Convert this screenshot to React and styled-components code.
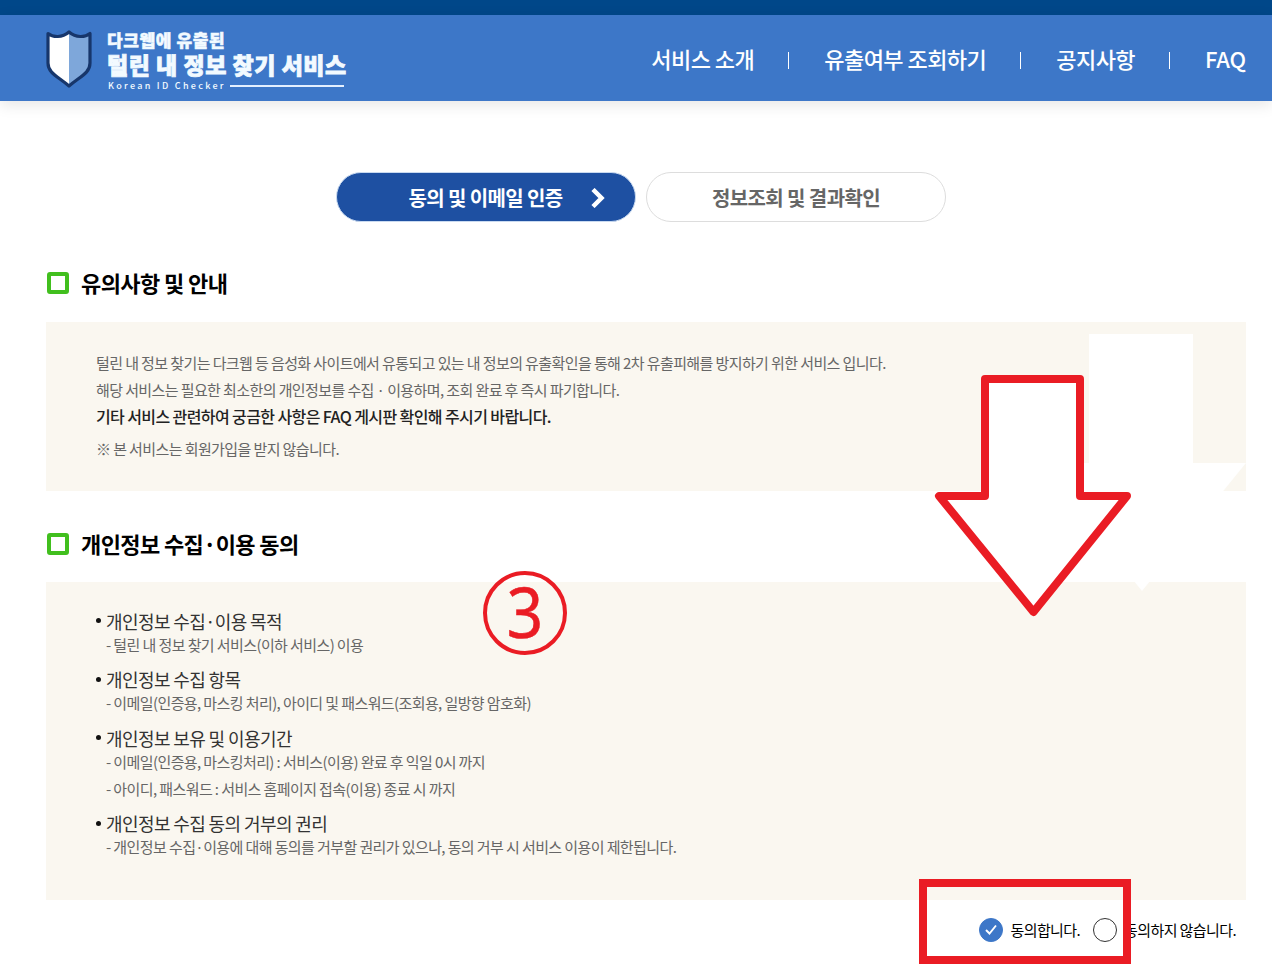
import React from "react";
import styled, { createGlobalStyle } from "styled-components";

const notices = [
  { text: "털린 내 정보 찾기는 다크웹 등 음성화 사이트에서 유통되고 있는 내 정보의 유출확인을 통해 2차 유출피해를 방지하기 위한 서비스 입니다." },
  { text: "해당 서비스는 필요한 최소한의 개인정보를 수집 · 이용하며, 조회 완료 후 즉시 파기합니다." },
  { text: "기타 서비스 관련하여 궁금한 사항은 FAQ 게시판 확인해 주시기 바랍니다.", strong: true },
];

const terms = [
  {
    title: "개인정보 수집·이용 목적",
    details: ["- 털린 내 정보 찾기 서비스(이하 서비스) 이용"],
  },
  {
    title: "개인정보 수집 항목",
    details: ["- 이메일(인증용, 마스킹 처리), 아이디 및 패스워드(조회용, 일방향 암호화)"],
  },
  {
    title: "개인정보 보유 및 이용기간",
    details: [
      "- 이메일(인증용, 마스킹처리) : 서비스(이용) 완료 후 익일 0시 까지",
      "- 아이디, 패스워드 : 서비스 홈페이지 접속(이용) 종료 시 까지",
    ],
  },
  {
    title: "개인정보 수집 동의 거부의 권리",
    details: ["- 개인정보 수집·이용에 대해 동의를 거부할 권리가 있으나, 동의 거부 시 서비스 이용이 제한됩니다."],
  },
];

const Header = () => (
  <HeaderBar>
    <Logo href="#">
      <svg width="48" height="60" viewBox="0 0 48 60">
        <path
          d="M3 4.500C8 8.500 17 9 24 3C31 9 40 8.500 45 4.500V34C45 44 36 47 24 57C12 47 3 44 3 34Z"
          fill="#fff"
        />
        <path d="M24 3C31 9 40 8.500 45 4.500V34C45 44 36 47 24 57Z" fill="#7ea7da" />
        <path
          d="M3 4.500C8 8.500 17 9 24 3C31 9 40 8.500 45 4.500V34C45 44 36 47 24 57C12 47 3 44 3 34Z"
          fill="none"
          stroke="#17366b"
          strokeWidth="3.200"
          strokeLinejoin="round"
        />
      </svg>
      <LogoText>
        <LogoTop>다크웹에 유출된</LogoTop>
        <LogoName>털린 내 정보 찾기 서비스</LogoName>
        <LogoEnglish>Korean ID Checker</LogoEnglish>
      </LogoText>
    </Logo>
    <Nav>
      <a href="#">서비스 소개</a>
      <a href="#">유출여부 조회하기</a>
      <a href="#">공지사항</a>
      <a href="#">FAQ</a>
    </Nav>
  </HeaderBar>
);

const App = () => {
  return (
    <Page>
      <GlobalStyle />
      <TopStrip />
      <Header />
      <Steps>
        <Step $active>
          동의 및 이메일 인증
          <svg width="16" height="20" viewBox="0 0 16 20">
            <path d="M3 1.500L11.500 10L3 18.500" fill="none" stroke="#fff" strokeWidth="4.500" />
          </svg>
        </Step>
        <Step>정보조회 및 결과확인</Step>
      </Steps>
      <Content>
        <SectionTitle $gap={23}>유의사항 및 안내</SectionTitle>
        <NoticeBox>
          {notices.map((n) => (
            <Line key={n.text} $strong={n.strong}>
              {n.text}
            </Line>
          ))}
          <Footnote>※ 본 서비스는 회원가입을 받지 않습니다.</Footnote>
        </NoticeBox>
        <SectionTitle $gap={22}>개인정보 수집·이용 동의</SectionTitle>
        <TermsBox>
          {terms.map((t) => (
            <li key={t.title}>
              <TermTitle>{t.title}</TermTitle>
              {t.details.map((d) => (
                <TermDetail key={d}>{d}</TermDetail>
              ))}
            </li>
          ))}
        </TermsBox>
        <Agreement>
          <Choice>
            <Radio $checked>
              <svg width="12" height="12" viewBox="0 0 12 12">
                <path d="M1 6L4.500 9.500L11 1.500" fill="none" stroke="#fff" strokeWidth="1.900" />
              </svg>
            </Radio>
            동의합니다.
          </Choice>
          <Choice>
            <Radio />
            동의하지 않습니다.
          </Choice>
        </Agreement>
      </Content>
      <Arrows width="320" height="300" viewBox="930 325 320 300">
        <path d="M1089 334H1193V463H1246L1142 591L1038 463H1089Z" fill="#fff" />
        <path
          d="M985 379H1080V496H1127L1033.500 612L939 496H985Z"
          fill="#fff"
          stroke="#ea1c24"
          strokeWidth="8"
          strokeLinejoin="round"
        />
      </Arrows>
      <StepNumber>
        <span>3</span>
      </StepNumber>
      <Highlight />
    </Page>
  );
};

export default App;

const GlobalStyle = createGlobalStyle`
  *,
  *::before,
  *::after {
    box-sizing: border-box;
  }

  body {
    margin: 0;
    background: #fff;
    font-family: "Noto Sans CJK KR", sans-serif;
  }

  a {
    color: inherit;
    text-decoration: none;
  }
`;

const Page = styled.div`
  position: relative;
  width: 1272px;
  height: 973px;
  overflow: hidden;
`;

const TopStrip = styled.div`
  height: 15px;
  background: #004789;
`;

const HeaderBar = styled.header`
  display: flex;
  justify-content: space-between;
  height: 86px;
  padding: 0 26px 0 45px;
  background: #3d77c8;
  color: #fff;
  box-shadow: 0 4px 14px rgba(0, 0, 0, 0.1);
`;

const Logo = styled.a`
  display: flex;
  gap: 14px;
  padding-top: 14px;
`;

const LogoText = styled.div`
  display: flex;
  flex-direction: column;
  white-space: nowrap;
  color: #f2faff;
`;

const LogoTop = styled.span`
  font-size: 17px;
  font-weight: 900;
  line-height: 22px;
  letter-spacing: 0.6px;
  -webkit-text-stroke: 0.5px #f2faff;
`;

const LogoName = styled.span`
  font-size: 23px;
  font-weight: 900;
  line-height: 26px;
  letter-spacing: 0.5px;
  -webkit-text-stroke: 0.8px #f2faff;
`;

const LogoEnglish = styled.span`
  display: flex;
  align-items: center;
  padding: 1px 0 0 1px;
  font-size: 9px;
  font-weight: 500;
  line-height: 15px;
  letter-spacing: 2.3px;

  &::after {
    content: "";
    width: 114px;
    height: 2px;
    margin-left: 4px;
    background: #e3efff;
  }
`;

const Nav = styled.nav`
  display: flex;
  align-items: center;
  height: 85px;
  font-size: 22px;
  font-weight: 500;
  letter-spacing: -0.54px;

  a + a {
    display: flex;
    align-items: center;
  }

  a + a::before {
    content: "";
    width: 1px;
    height: 17px;
    margin: 5px 35px 0 34px;
    background: #fff;
  }

  a:last-child {
    letter-spacing: -0.2px;
  }
`;

const Steps = styled.div`
  display: flex;
  gap: 10px;
  padding: 71px 0 0 336px;
`;

const Step = styled.div`
  display: flex;
  align-items: center;
  justify-content: center;
  width: 300px;
  height: 50px;
  border: 1px solid ${(props) => (props.$active ? "#c9daf0" : "#ddd")};
  border-radius: 25px;
  background: ${(props) => (props.$active ? "#1e50a2" : "#fff")};
  color: ${(props) => (props.$active ? "#fff" : "#666")};
  font-size: 20px;
  font-weight: 700;
  letter-spacing: -0.6px;

  svg {
    margin: 2px -42px 0 27px;
  }
`;

const Content = styled.main`
  width: 1200px;
  margin: 47px 0 0 46px;
`;

const SectionTitle = styled.h2`
  display: flex;
  align-items: center;
  height: 30px;
  margin: 0 0 ${(props) => props.$gap}px;
  padding-bottom: 4px;
  color: #000;
  font-size: 22px;
  font-weight: 700;
  letter-spacing: -0.6px;

  &::before {
    content: "";
    width: 22px;
    height: 22px;
    margin: 2px 12px 0 1px;
    border: 4px solid #41bf1e;
    border-radius: 3px;
  }
`;

const NoticeBox = styled.div`
  height: 169px;
  margin-bottom: 39px;
  padding: 27px 50px;
  background: #faf7f0;
`;

const Line = styled.p`
  margin: 0;
  color: ${(props) => (props.$strong ? "#222" : "#666")};
  font-size: ${(props) => (props.$strong ? 16 : 15)}px;
  font-weight: ${(props) => (props.$strong ? 500 : 400)};
  line-height: 27px;
  letter-spacing: -0.6px;
  white-space: nowrap;
`;

const Footnote = styled(Line)`
  margin-top: 5px;
`;

const TermsBox = styled.ul`
  height: 318px;
  margin: 0;
  padding: 26.5px 50px;
  background: #faf7f0;
  list-style: none;

  li {
    margin-bottom: 9.5px;
  }
`;

const TermTitle = styled.div`
  display: flex;
  align-items: center;
  margin-bottom: -2px;
  color: #333;
  font-size: 18px;
  line-height: 24px;
  letter-spacing: -0.6px;

  &::before {
    content: "";
    width: 5px;
    height: 5px;
    margin-right: 5px;
    border-radius: 50%;
    background: #111;
  }
`;

const TermDetail = styled(Line)`
  padding-left: 10px;
`;

const Agreement = styled.div`
  display: flex;
  justify-content: flex-end;
  gap: 12.5px;
  padding: 18px 10px 0 0;
`;

const Choice = styled.label`
  display: flex;
  align-items: center;
  gap: 7.5px;
  color: #000;
  font-size: 15px;
  line-height: 24px;
  letter-spacing: -0.6px;
`;

const Radio = styled.span`
  display: flex;
  align-items: center;
  justify-content: center;
  width: 24px;
  height: 24px;
  border: 1px solid ${(props) => (props.$checked ? "#3d77c8" : "#333")};
  border-radius: 50%;
  background: ${(props) => (props.$checked ? "#3d77c8" : "#fff")};
`;

const Arrows = styled.svg`
  position: absolute;
  left: 930px;
  top: 325px;
`;

const StepNumber = styled.div`
  position: absolute;
  left: 483px;
  top: 571px;
  display: flex;
  align-items: center;
  justify-content: center;
  width: 84px;
  height: 84px;
  padding-bottom: 4px;
  border: 4px solid #ea1c24;
  border-radius: 50%;
  color: #ea1c24;
  font-family: "Noto Sans", sans-serif;
  font-size: 70px;
  line-height: 84px;

  span {
    transform: scaleX(0.92);
    -webkit-text-stroke: 0.5px #ea1c24;
  }
`;

const Highlight = styled.div`
  position: absolute;
  left: 919px;
  top: 879px;
  width: 212px;
  height: 85px;
  border: 8px solid #ea1c24;
`;
